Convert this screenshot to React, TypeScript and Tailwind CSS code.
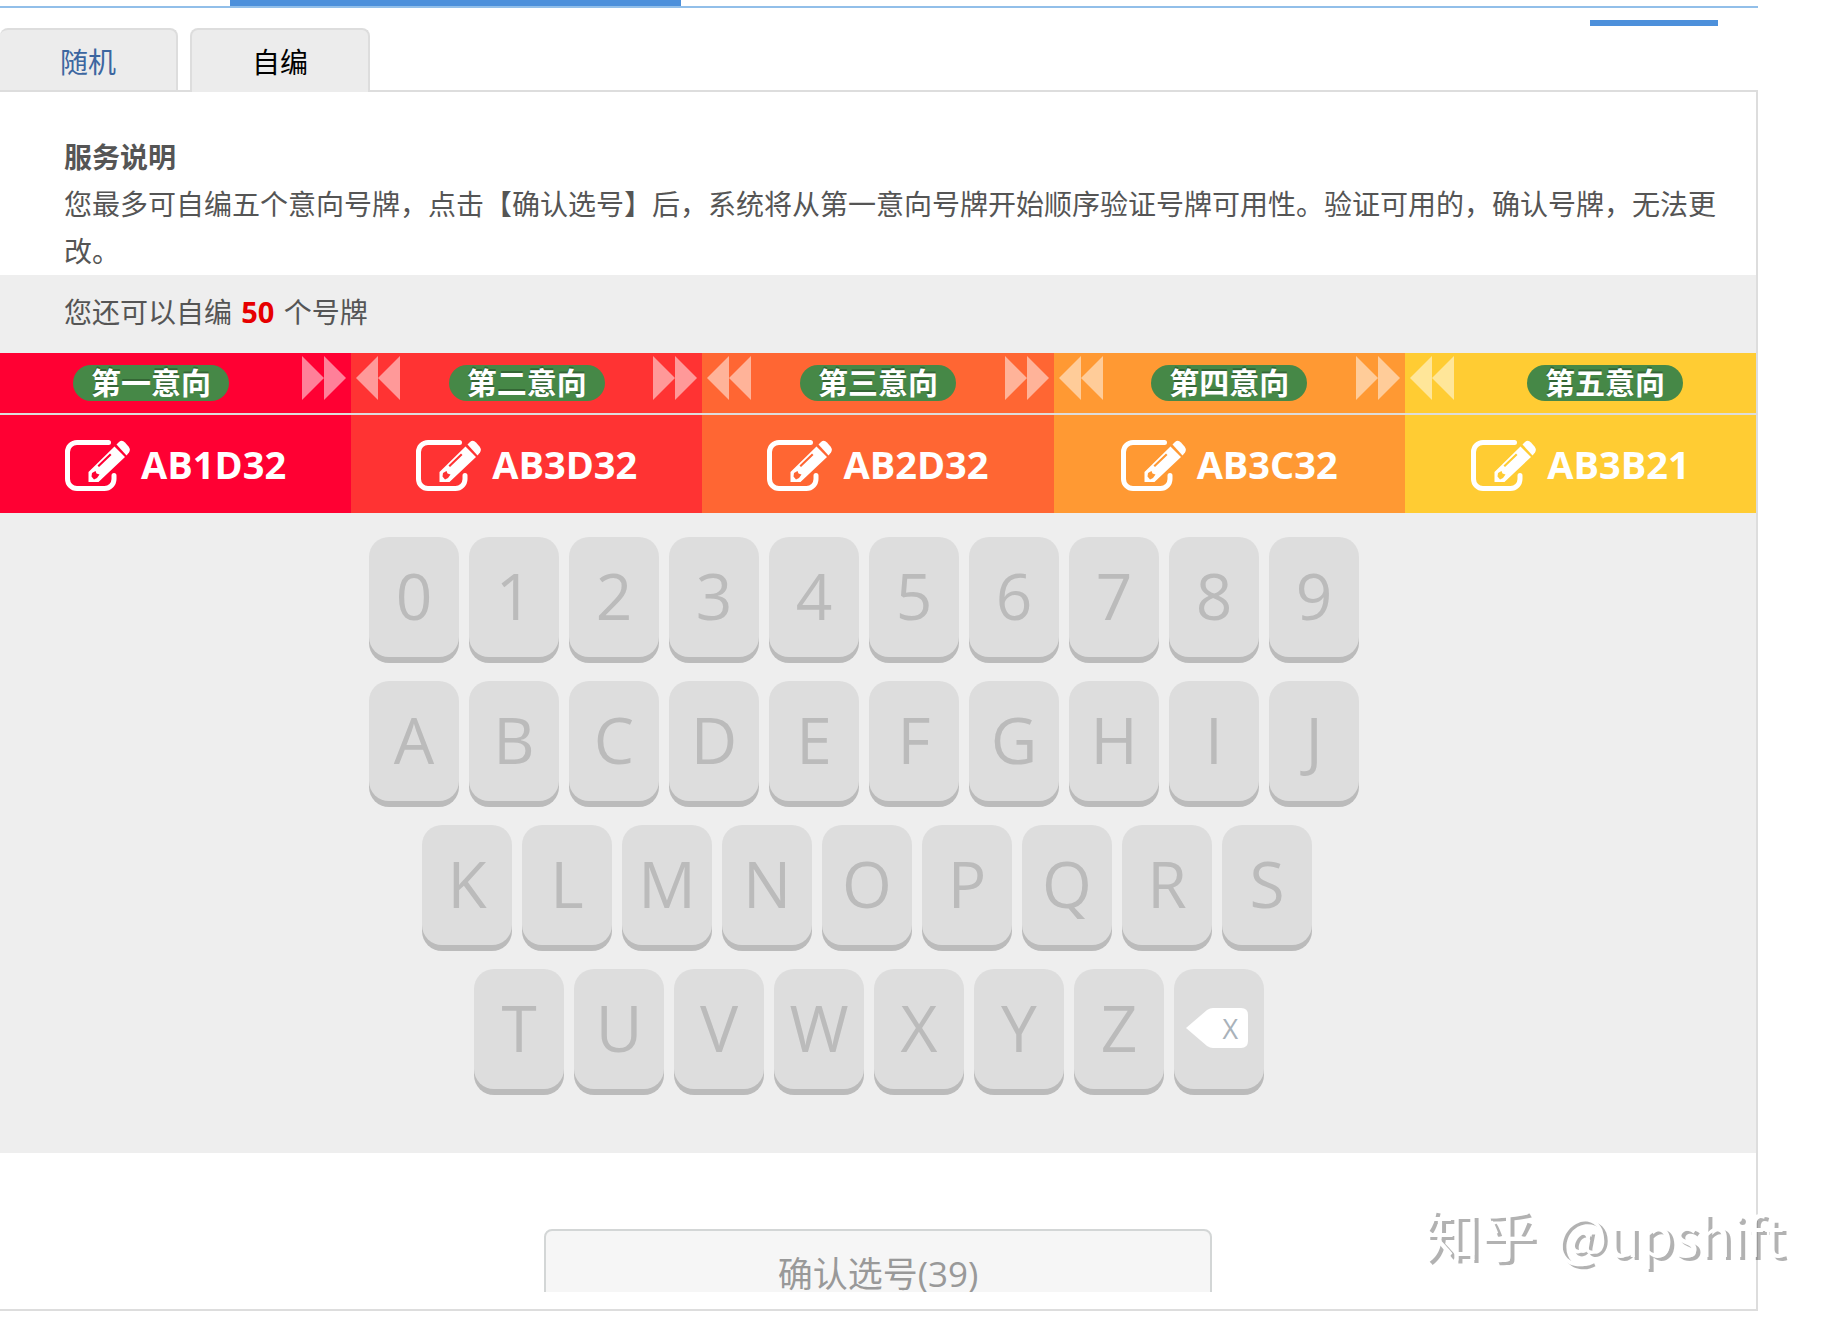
import { useState } from "react"

const TABS = ["随机", "自编"]

const INTENTS = [
  { title: "第一意向", plate: "AB1D32", bg: "bg-[#ff0033]" },
  { title: "第二意向", plate: "AB3D32", bg: "bg-[#ff3333]" },
  { title: "第三意向", plate: "AB2D32", bg: "bg-[#ff6633]" },
  { title: "第四意向", plate: "AB3C32", bg: "bg-[#ff9933]" },
  { title: "第五意向", plate: "AB3B21", bg: "bg-[#ffcc33]" },
]

// Each row starts a little further right than the one above
const KEY_ROWS = [
  { keys: "0123456789", indent: "" },
  { keys: "ABCDEFGHIJ", indent: "" },
  { keys: "KLMNOPQRS", indent: "pl-[53px]" },
  { keys: "TUVWXYZ", indent: "pl-[105px]" },
]

const KEY_CLASS =
  "flex h-[120px] w-[90px] items-center justify-center rounded-[20px] bg-[#ddd] pb-[2px] text-[64px] font-medium leading-none text-[#bbb] shadow-[0_6px_0_#bbb]"

function MoveArrow({ dir }: { dir: "left" | "right" }) {
  return (
    <button aria-label={dir === "left" ? "前移" : "后移"} className="mt-[3px] w-[49px] flex-none self-start">
      <svg viewBox="0 0 44 44" className={`h-11 w-11 ${dir === "left" ? "ml-[5px]" : ""}`} fill="#fff" fillOpacity="0.5">
        {dir === "left"
          ? <path d="M22 0v44L0 22zM44 0v44L22 22z" />
          : <path d="M0 0v44l22-22zM22 0v44l22-22z" />}
      </svg>
    </button>
  )
}

function EditIcon() {
  return (
    <svg viewBox="0 0 65 51" className="mt-[3px] h-[51px] w-[65px] flex-none" fill="#fff" aria-hidden="true">
      <path
        d="M43.500 2.500H12A9.500 9.500 0 0 0 2.500 12v27A9.500 9.500 0 0 0 12 48.500h27.500A9.500 9.500 0 0 0 49 39v-3.500"
        fill="none" stroke="#fff" strokeWidth="5" strokeLinecap="round"
      />
      {/* eraser */}
      <path d="M51.500 4.500l2.500-2.500q3-2.500 6 .500l3.500 4q2.500 3 .500 6l-2.500 3z" />
      {/* pencil body with the groove and the lead cut out */}
      <path
        fillRule="evenodd"
        d="M49.500 6.500L60 17 33.500 42H23.500V32zM45 13.500L32.500 25.500l1.500 1.500L46.500 15zM27 33l3.500-2 1 2.500 3 1-2.500 3.500-3 1.500-2.500-3z"
      />
    </svg>
  )
}

export default function App() {
  const [tab, setTab] = useState("自编")

  return (
    <div className="relative overflow-hidden bg-white pb-[11px] pr-[74px] font-['Open_Sans','Noto_Sans_CJK_SC',sans-serif] text-[28px] text-[#555]">
      {/* Step bar */}
      <div className="h-2 border-b-2 border-[#92bfe9]">
        <div className="ml-[230px] h-1.5 w-[451px] bg-[#4d90db]" />
      </div>
      <div className="mt-3 flex justify-end pr-10">
        <div className="h-1.5 w-32 bg-[#4d90db]" />
      </div>

      {/* Tabs */}
      <div role="tablist" className="relative mt-[2px] flex gap-3">
        {TABS.map((t, i) => (
          <button
            key={t}
            role="tab"
            aria-selected={tab === t}
            onClick={() => setTab(t)}
            className={`border-t-2 border-r-2 border-[#ddd] bg-[#ececec] pt-1 leading-[56px] ${i === 0 ? "w-[178px] rounded-t-lg" : "w-[180px] rounded-t-lg border-l-2"} ${tab === t ? "-mb-[2px] pb-[2px] text-black" : "text-[#3c66a0]"}`}
          >
            {t}
          </button>
        ))}
      </div>

      <main className="border-t-2 border-r-2 border-b-2 border-[#ddd] pb-[17px]">
        <section className="pt-[41px] pr-9 pl-16">
          <h1 className="font-bold leading-[48px]">服务说明</h1>
          <p className="leading-[47px]">
            您最多可自编五个意向号牌，点击【确认选号】后，系统将从第一意向号牌开始顺序验证号牌可用性。验证可用的，确认号牌，无法更改。
          </p>
        </section>

        <div className="bg-[#eee]">
          <p className="h-[78px] px-16 leading-[74px]">
            您还可以自编 <b className="mx-[2px] text-[29px] text-[#e60000]">50</b> 个号牌
          </p>

          {/* Intent plates */}
          <div className="flex">
            {INTENTS.map((it, i) => (
              <div key={it.title} className={`flex-1 ${it.bg}`}>
                <div className="flex h-[62px] items-center border-b-2 border-[#ddd]">
                  {i > 0 && <MoveArrow dir="left" />}
                  <div className="flex flex-1 justify-center">
                    <span className="h-9 rounded-full bg-[#468847] px-[18px] text-[30px] font-bold leading-9 text-white [text-shadow:0_-2px_0_rgba(0,0,0,0.25)]">
                      {it.title}
                    </span>
                  </div>
                  {i < INTENTS.length - 1 && <MoveArrow dir="right" />}
                </div>
                <button className="flex h-[98px] w-full items-center justify-center gap-[11px] text-[38px] font-bold leading-none text-white">
                  <EditIcon />
                  {it.plate}
                </button>
              </div>
            ))}
          </div>

          {/* Keyboard */}
          <div className="flex justify-center pt-6 pb-[64px] pr-7">
            <div className="flex flex-col gap-6">
              {KEY_ROWS.map((row, i) => (
                <div key={row.keys} className={`flex gap-[10px] ${row.indent}`}>
                  {row.keys.split("").map(k => (
                    <button key={k} className={KEY_CLASS}>{k}</button>
                  ))}
                  {i === KEY_ROWS.length - 1 && (
                    <button className={`${KEY_CLASS} pr-1`}>
                      <span className="relative flex h-10 w-[62px] items-center justify-end pr-[10px] text-[27px] text-[#a9b2ba]">
                        <svg viewBox="0 0 62 40" className="absolute inset-0" fill="#fff" aria-hidden="true">
                          <path d="M0 20L21 2q3-2 6-2h28q7 0 7 7v26q0 7-7 7H27q-3 0-6-2z" />
                        </svg>
                        <span className="relative">X</span>
                      </span>
                    </button>
                  )}
                </div>
              ))}
            </div>
          </div>
        </div>

        {/* Confirm button, lower part is cut off by its holder */}
        <div className="mt-[76px] flex h-[63px] justify-center overflow-hidden">
          <button className="h-[92px] w-[38%] rounded-lg border-2 border-[#d3d6d6] bg-[#f6f6f6] pb-1 text-[35px] leading-none text-[#999]">
            确认选号(39)
          </button>
        </div>
      </main>

      {/* Watermark */}
      <div className="absolute right-[48px] bottom-[48px] flex items-baseline gap-5 font-['Noto_Sans_CJK_SC',sans-serif] text-[54px] leading-[80px] text-white [text-shadow:4px_3px_0_rgba(0,0,0,0.3)]">
        <span className="text-[56px]">知乎</span>
        <span>@upshift</span>
      </div>
    </div>
  )
}
